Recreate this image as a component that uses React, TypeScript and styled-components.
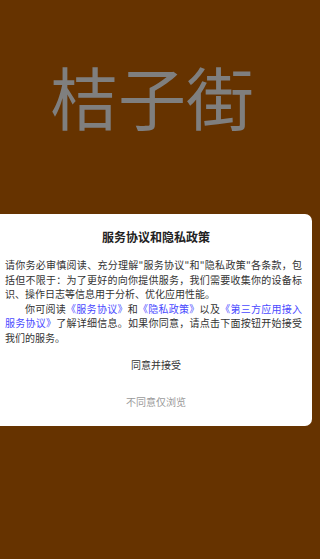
import React from "react";
import styled, { createGlobalStyle } from "styled-components";

const Global = createGlobalStyle`
  html, body { margin: 0; padding: 0; background: #663300; }
  body { font-family: "Noto Sans CJK SC", "Noto Sans", sans-serif; }
`;

const Page = styled.div`
  width: 320px;
  height: 559px;
  background: #663300;
  display: flex;
  flex-direction: column;
  overflow: hidden;
`;

const Brand = styled.h1`
  margin: 0;
  padding: 50px 0 0 50px;
  height: 156px;
  box-sizing: border-box;
  font-size: 68px;
  line-height: 92px;
  font-weight: 400;
  color: #7f7f7f;
`;

const Dialog = styled.div`
  margin-top: 58px;
  width: 312px;
  height: 212px;
  box-sizing: border-box;
  background: #ffffff;
  border-radius: 0 7px 7px 0;
  display: flex;
  flex-direction: column;
`;

const Title = styled.div`
  padding-top: 15px;
  font-size: 12px;
  line-height: 16px;
  font-weight: 700;
  text-align: center;
  color: #222;
`;

const Body = styled.div`
  margin-top: 13px;
  padding: 0 10px 0 5px;
  font-size: 10px;
  line-height: 14.6px;
  color: #333;
  text-align: justify;
`;

const Para = styled.p<{ $indent?: boolean }>`
  margin: 0;
  text-indent: ${(p) => (p.$indent ? "2em" : "0")};
`;

const Link = styled.a`
  color: #4a4aff;
  text-decoration: none;
`;

const Action = styled.button<{ $muted?: boolean }>`
  height: 37px;
  border: none;
  background: transparent;
  font-family: inherit;
  font-size: 10px;
  color: ${(p) => (p.$muted ? "#9a9a9a" : "#333")};
  padding: 0;
  cursor: pointer;
`;

export default function App() {
  return (
    <Page>
      <Global />
      <Brand>桔子街</Brand>
      <Dialog>
        <Title>服务协议和隐私政策</Title>
        <Body>
          <Para>
            请你务必审慎阅读、充分理解"服务协议"和"隐私政策"各条款，包括但不限于：为了更好的向你提供服务，我们需要收集你的设备标识、操作日志等信息用于分析、优化应用性能。
          </Para>
          <Para $indent>
            你可阅读<Link>《服务协议》</Link>和<Link>《隐私政策》</Link>以及<Link>《第三方应用接入服务协议》</Link>了解详细信息。如果你同意，请点击下面按钮开始接受我们的服务。
          </Para>
        </Body>
        <Action>同意并接受</Action>
        <Action $muted>不同意仅浏览</Action>
      </Dialog>
    </Page>
  );
}
